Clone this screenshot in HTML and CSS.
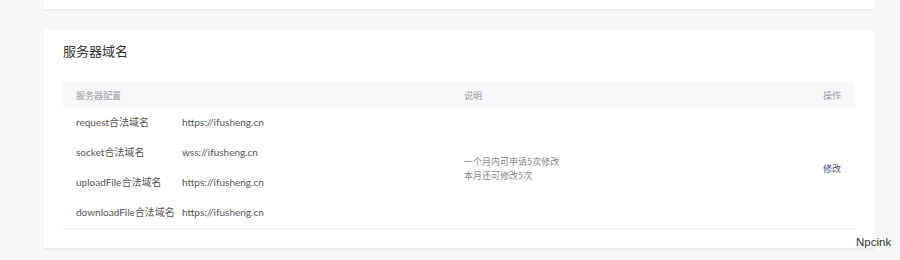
FILE: index.html
```html
<!DOCTYPE html>
<html lang="zh-CN">
  <head>
    <meta charset="utf-8" />
    <title>服务器域名</title>
    <link rel="stylesheet" href="styles.css">
  </head>
  <body>
    <div class="page">
      <div class="panel panel--cut"></div>

      <div class="panel">
        <h2 class="panel__title">服务器域名</h2>
        <table class="domains">
          <thead>
            <tr>
              <th class="domains__name">服务器配置</th>
              <th class="domains__value"></th>
              <th class="domains__desc">说明</th>
              <th class="domains__op">操作</th>
            </tr>
          </thead>
          <tbody>
            <tr>
              <td class="domains__name">request合法域名</td>
              <td class="domains__value">https://ifusheng.cn</td>
              <td class="domains__desc" rowspan="4">一个月内可申请5次修改<br>本月还可修改5次</td>
              <td class="domains__op" rowspan="4"><a href="#">修改</a></td>
            </tr>
            <tr>
              <td class="domains__name">socket合法域名</td>
              <td class="domains__value">wss://ifusheng.cn</td>
            </tr>
            <tr>
              <td class="domains__name">uploadFile合法域名</td>
              <td class="domains__value">https://ifusheng.cn</td>
            </tr>
            <tr>
              <td class="domains__name">downloadFile合法域名</td>
              <td class="domains__value">https://ifusheng.cn</td>
            </tr>
          </tbody>
        </table>
      </div>
    </div>
    <div class="watermark">Npcink</div>
  </body>
</html>
```

FILE: styles.css
```css
html, body {
	margin: 0;
	height: 100%;
}
body {
	background: #f6f7f9;
	font-family: Lato, "Noto Sans CJK SC", sans-serif;
	color: #444;
	overflow: hidden;
}

.page {
	width: 830px;
	margin-left: 44px;
	display: flex;
	flex-direction: column;
	gap: 20px;
}

.panel {
	background: #fff;
	padding: 12px 19px 19px;
	box-shadow: 0 1px 1px rgba(0, 0, 0, 0.04);
	border-bottom: 1px solid #eceef1;
}
.panel--cut {
	height: 9px;
	padding: 0;
}
.panel__title {
	margin: 0 0 22px;
	font-family: "Noto Sans CJK SC", sans-serif;
	font-size: 13px;
	font-weight: normal;
	line-height: 18px;
	color: #333;
}

.domains {
	width: 792px;
	border-collapse: collapse;
	table-layout: fixed;
	font-size: 10px;
	border-bottom: 1px solid #ebedf0;
}
.domains th {
	height: 26px;
	padding: 0;
	background: #f7f8fa;
	font-size: 9px;
	font-weight: normal;
	color: #999;
	text-align: left;
}
.domains td {
	height: 27px;
	padding: 0 0 3px;
	color: #555;
	white-space: nowrap;
}
.domains__name {
	width: 106px;
	padding-left: 13px !important;
}
.domains__value {
	width: 282px;
}
.domains__desc {
	width: 359px;
}
td.domains__desc {
	font-size: 9px;
	line-height: 14px;
	color: #888 !important;
	padding: 2px 0 0;
}
td.domains__op {
	padding: 0;
}
td.domains__op a {
	font-size: 9px;
	color: #47508a;
	text-decoration: none;
}

.watermark {
	position: absolute;
	left: 856px;
	top: 236px;
	font-family: "Liberation Sans", sans-serif;
	font-size: 11.5px;
	color: #333;
	text-shadow: 0 0 2px #fff;
}
```
